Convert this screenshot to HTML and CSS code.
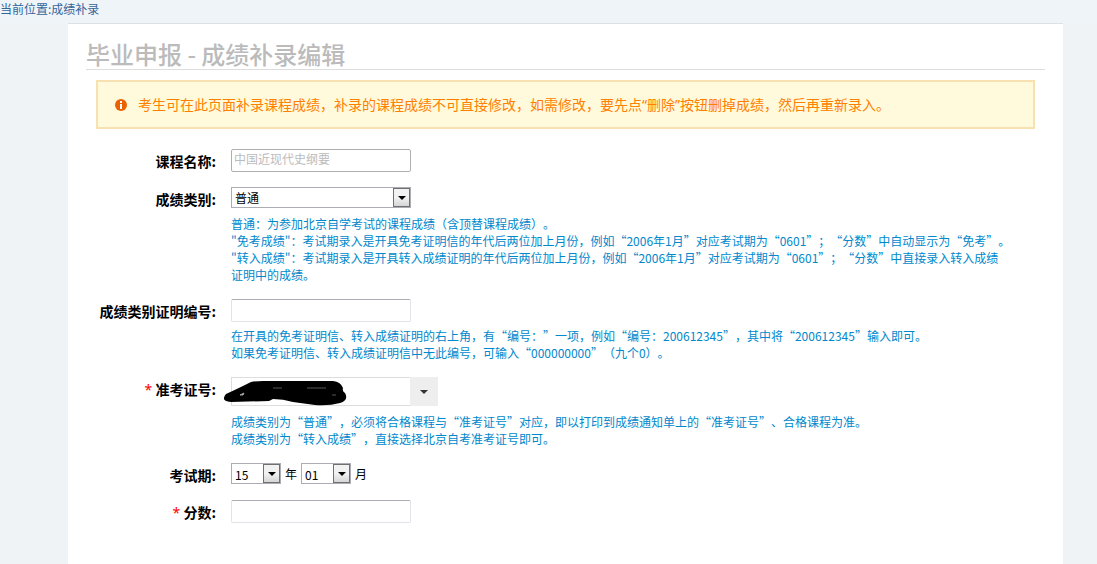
FILE: index.html
```html
<!DOCTYPE html>
<html lang="zh-CN">
<head>
    <meta charset="UTF-8">
    <meta name="viewport" content="width=device-width, initial-scale=1.0">
    <title>毕业申报 - 成绩补录编辑</title>
    <link rel="stylesheet" href="styles.css">
</head>

<body>

    <div class="location">当前位置:成绩补录</div>

    <main class="panel">
        <h1 class="title">毕业申报 - 成绩补录编辑</h1>

        <div class="alert">
            <svg class="alert-icon" viewBox="0 0 12 12" aria-hidden="true">
                <circle cx="6" cy="6" r="6" fill="#eb6100"/>
                <path d="M5 2h2v2H5zM5 5h2v5H5z" fill="#fff"/>
            </svg>
            <p>考生可在此页面补录课程成绩，补录的课程成绩不可直接修改，如需修改，要先点“删除”按钮删掉成绩，然后再重新录入。</p>
        </div>

        <form class="form">
            <div class="row">
                <label class="label" for="course">课程名称:</label>
                <div class="field">
                    <input class="input input-disabled" type="text" id="course" value="中国近现代史纲要" disabled>
                </div>
            </div>

            <div class="row">
                <label class="label" for="kind">成绩类别:</label>
                <div class="field">
                    <span class="select select-wide">
                        <select id="kind">
                            <option>普通</option>
                            <option>免考成绩</option>
                            <option>转入成绩</option>
                        </select>
                    </span>
                    <p class="help">普通：为参加北京自学考试的课程成绩（含顶替课程成绩）。<br>
                    "免考成绩"：考试期录入是开具免考证明信的年代后两位加上月份，例如“2006年1月”对应考试期为“0601”；“分数”中自动显示为“免考”。<br>
                    "转入成绩"：考试期录入是开具转入成绩证明的年代后两位加上月份，例如“2006年1月”对应考试期为“0601”；“分数”中直接录入转入成绩<br>
                    证明中的成绩。</p>
                </div>
            </div>

            <div class="row">
                <label class="label" for="proof">成绩类别证明编号:</label>
                <div class="field">
                    <input class="input" type="text" id="proof">
                    <p class="help help-close">在开具的免考证明信、转入成绩证明的右上角，有“编号：”一项，例如“编号：200612345”，其中将“200612345”输入即可。<br>
                    如果免考证明信、转入成绩证明信中无此编号，可输入“000000000”（九个0）。</p>
                </div>
            </div>

            <div class="row">
                <label class="label" for="ticket"><span class="required">*</span> 准考证号:</label>
                <div class="field">
                    <div class="combo">
                        <input class="combo-input" type="text" id="ticket">
                        <button class="combo-button" type="button" aria-label="选择准考证号"></button>
                        <svg class="scribble" viewBox="0 0 126 28" aria-hidden="true">
                            <path d="M3 15Q14 10 28 3Q32 2 40 2L110 2Q118 3 120 9Q119 12 122 14Q126 21 117 24Q106 27 92 26L70 23Q60 20 50 20L46 22L8 23Q-3 22 3 15Z"/>
                            <path d="M17 16l4-2l-1 2z" fill="#fff" stroke="#999"/>
                            <path d="M50 9h9M84 9h19M109 16h4" stroke="#555"/>
                        </svg>
                    </div>
                    <p class="help">成绩类别为“普通”，必须将合格课程与“准考证号”对应，即以打印到成绩通知单上的“准考证号”、合格课程为准。<br>
                    成绩类别为“转入成绩”，直接选择北京自考准考证号即可。</p>
                </div>
            </div>

            <div class="row">
                <label class="label" for="year">考试期:</label>
                <div class="field period">
                    <span class="select"><select id="year"><option>15</option></select></span>
                    <label for="year">年</label>
                    <span class="select"><select id="month"><option>01</option></select></span>
                    <label for="month">月</label>
                </div>
            </div>

            <div class="row">
                <label class="label" for="score"><span class="required">*</span> 分数:</label>
                <div class="field">
                    <input class="input" type="text" id="score">
                </div>
            </div>
        </form>
    </main>

</body>
</html>
```
FILE: styles.css
```css
*,
*::before,
*::after {
    margin: 0;
    padding: 0;
    box-sizing: border-box;
}

body {
    display: flex;
    flex-direction: column;
    min-height: 100vh;
    background-color: #eff3f5;
    color: #000;
    font: 12px/17px "Noto Sans CJK SC", sans-serif;
    text-spacing-trim: space-all;
}

.location {
    height: 23px;
    background-color: #eff4f9;
    color: #336699;
}

.panel {
    flex: 1;
    margin: 0 34px 0 68px;
    padding: 18px;
    border-top: 1px solid #dde1e3;
    background-color: #fff;
}

.title {
    height: 28px;
    border-bottom: 1px solid #ddd;
    color: #bbb;
    font-size: 24px;
    font-weight: 500;
    line-height: 24px;
}

.alert {
    display: flex;
    align-items: center;
    gap: 11px;
    height: 49px;
    margin: 10px;
    padding: 0 17px;
    border: 2px solid #f7e1b0;
    background-color: #fffadc;
    color: #ff8000;
    font-family: "Noto Sans", "Noto Sans CJK SC", sans-serif;
    font-size: 14px;
}

.alert-icon {
    width: 12px;
    height: 12px;
}

.form {
    display: flex;
    flex-direction: column;
    gap: 15px;
    padding-top: 10px;
}

.row {
    display: flex;
    gap: 15px;
}

.label {
    width: 130px;
    flex: none;
    padding-top: 2px;
    font-size: 14px;
    font-weight: bold;
    line-height: 20px;
    text-align: right;
}

.required {
    color: #f00;
    font-family: "Noto Sans", sans-serif;
    font-weight: normal;
}

.field {
    flex: 1;
    max-width: 784px;
}

.input {
    display: block;
    width: 180px;
    height: 23px;
    padding: 0 2px;
    border: 1px solid #e2e3ea;
    border-top-color: #abadb3;
    border-radius: 2px;
    background-color: #fff;
    font: inherit;
}

.input-disabled {
    padding-bottom: 4px;
    border-color: #afafaf;
    color: #bbb;
}

.select {
    display: block;
    position: relative;
    width: 50px;
}

.select-wide {
    width: 180px;
}

.select select {
    display: block;
    width: 100%;
    height: 21px;
    padding: 0 3px;
    border: 1px solid #abadb3;
    border-radius: 0;
    background-color: #fff;
    color: #000;
    font: inherit;
    appearance: none;
}

/* drop-down button drawn over the right end of the select */
.select::before {
    content: "";
    position: absolute;
    top: 1px;
    right: 1px;
    width: 17px;
    height: 19px;
    border: 1px solid #707070;
    background: linear-gradient(#f2f2f2 50%, #d5d5d5);
    pointer-events: none;
}

.select::after,
.combo-button::after {
    content: "";
    border: 4px solid transparent;
    border-top-color: #000;
    border-bottom: 0;
}

.select::after {
    position: absolute;
    top: 9px;
    right: 5px;
    pointer-events: none;
}

.help {
    padding: 7px 0 1px;
    color: #0088cc;
}

.help-close {
    padding-top: 5px;
}

.combo {
    display: flex;
    position: relative;
    width: 207px;
    height: 29px;
}

.combo-input {
    flex: 1;
    min-width: 0;
    border: 1px solid #ddd;
    border-right: 0;
    font: inherit;
}

.combo-button {
    display: flex;
    align-items: center;
    justify-content: center;
    width: 28px;
    border: 0;
    background-color: #eee;
}

.combo-button::after {
    border-top-color: #333;
}

.scribble {
    position: absolute;
    top: 2px;
    left: -8px;
    width: 126px;
    height: 28px;
}

.period {
    display: flex;
    align-items: flex-start;
    gap: 4px;
    line-height: 21px;
}
```
